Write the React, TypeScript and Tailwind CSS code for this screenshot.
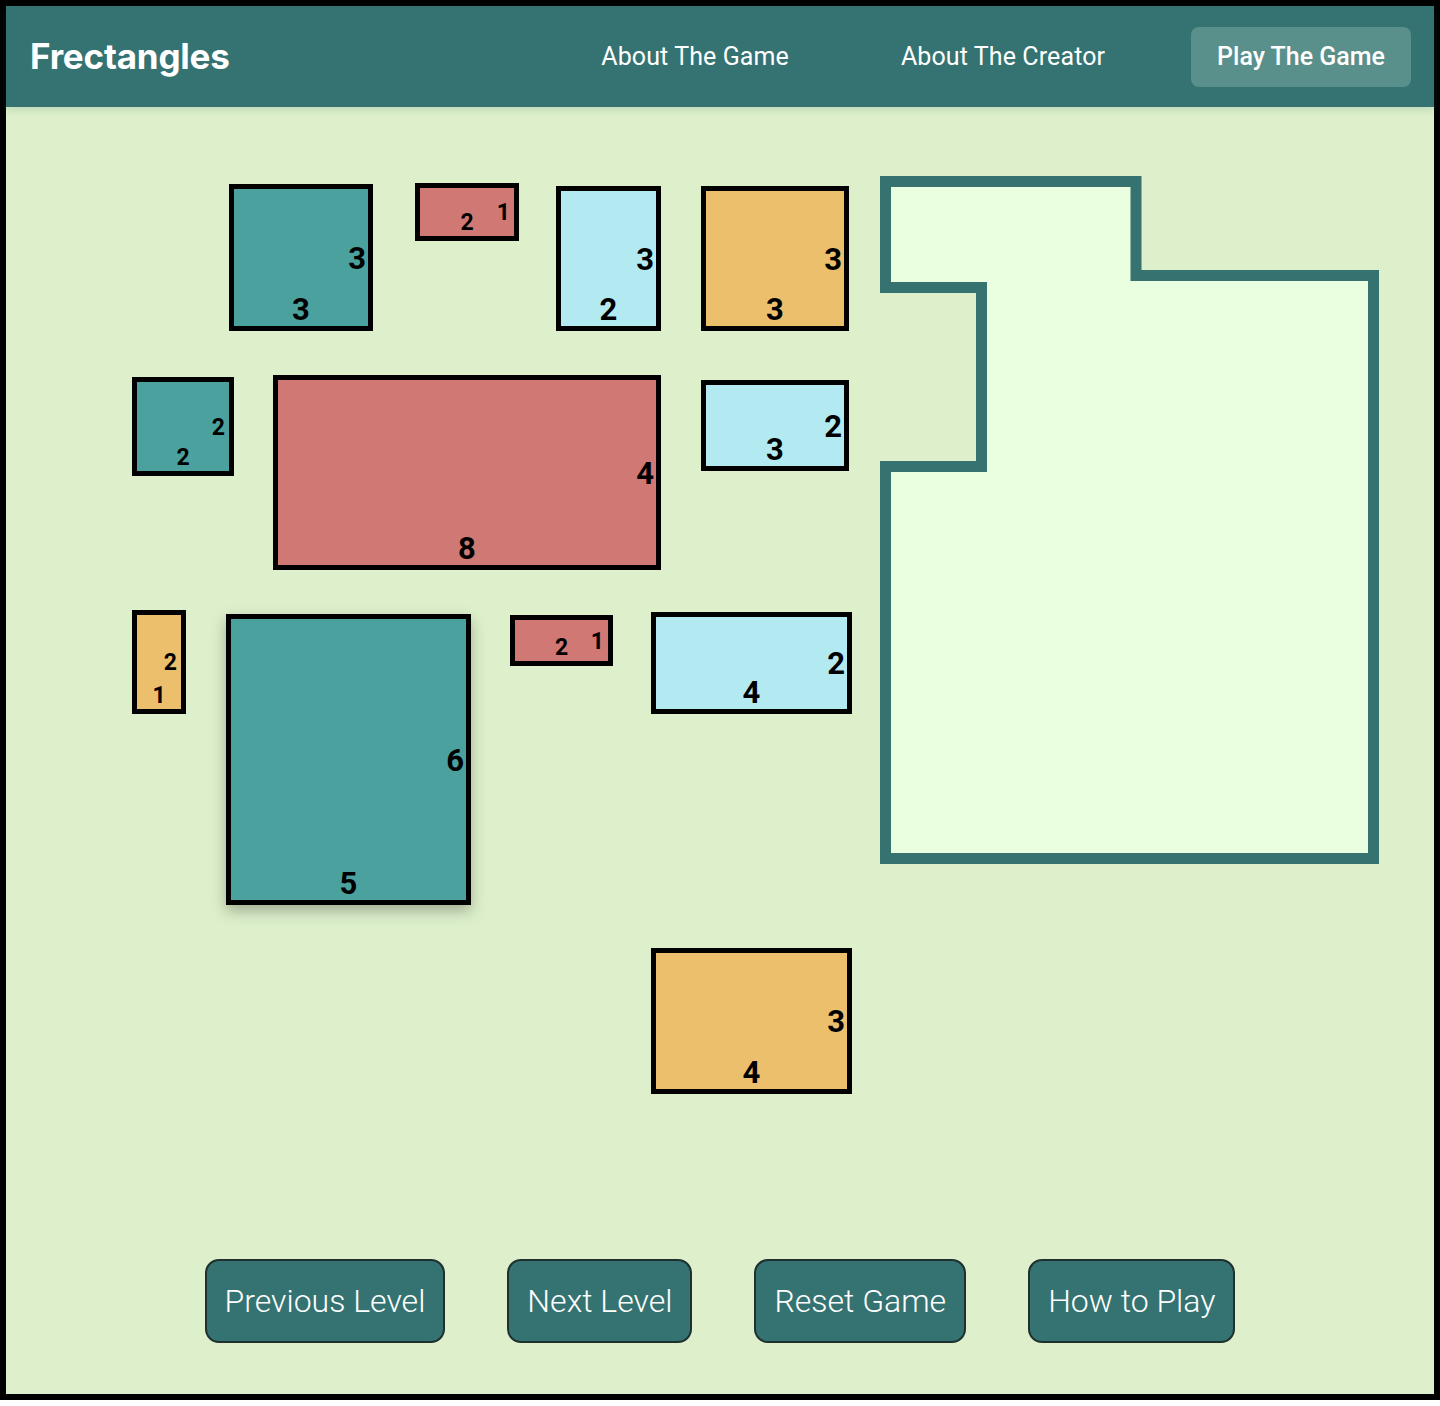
import React from "react";

type Tile = {
  x: number;
  y: number;
  w: number;
  h: number;
  color: string;
  across: number;
  down: number;
  small?: boolean;
  lifted?: boolean;
};

// page coords of each piece (outer edge), canvas starts at x=6, y=107
const tiles: Tile[] = [
  { x: 229, y: 184, w: 144, h: 147, color: "bg-[#4aa19e]", across: 3, down: 3 },
  { x: 415, y: 183, w: 104, h: 58, color: "bg-[#cf7874]", across: 2, down: 1, small: true },
  { x: 556, y: 186, w: 105, h: 145, color: "bg-[#b3eaf2]", across: 2, down: 3 },
  { x: 701, y: 186, w: 148, h: 145, color: "bg-[#ebbf6c]", across: 3, down: 3 },
  { x: 132, y: 377, w: 102, h: 99, color: "bg-[#4aa19e]", across: 2, down: 2, small: true },
  { x: 273, y: 375, w: 388, h: 195, color: "bg-[#cf7874]", across: 8, down: 4 },
  { x: 701, y: 380, w: 148, h: 91, color: "bg-[#b3eaf2]", across: 3, down: 2 },
  { x: 132, y: 610, w: 54, h: 104, color: "bg-[#ebbf6c]", across: 1, down: 2, small: true },
  { x: 226, y: 614, w: 245, h: 291, color: "bg-[#4aa19e]", across: 5, down: 6, lifted: true },
  { x: 510, y: 615, w: 103, h: 51, color: "bg-[#cf7874]", across: 2, down: 1, small: true },
  { x: 651, y: 612, w: 201, h: 102, color: "bg-[#b3eaf2]", across: 4, down: 2 },
  { x: 651, y: 948, w: 201, h: 146, color: "bg-[#ebbf6c]", across: 4, down: 3 },
];

function Piece({ t }: { t: Tile }) {
  const num = t.small ? "text-[23px]" : "text-[31px]";
  return (
    <div
      className={`absolute border-[5px] border-black ${t.color} ${t.lifted ? "shadow-[0_6px_14px_rgba(0,0,0,0.28)]" : ""}`}
      style={{ left: t.x - 6, top: t.y - 107, width: t.w, height: t.h }}
    >
      <span
        className={`absolute top-1/2 -translate-y-1/2 leading-none font-bold text-black ${num} ${t.small ? "right-[4px]" : "right-[2px]"}`}
      >
        {t.down}
      </span>
      <span
        className={`absolute left-1/2 -translate-x-1/2 leading-none font-bold text-black ${num} ${t.small ? "bottom-[2px]" : "bottom-[1px]"}`}
      >
        {t.across}
      </span>
    </div>
  );
}

function Board() {
  // target outline the pieces get dropped into
  return (
    <svg
      className="absolute"
      style={{ left: 874 - 6, top: 170 - 107 }}
      width={512}
      height={700}
      viewBox="874 170 512 700"
    >
      <polygon
        points="885.5,181.5 1136,181.5 1136,275.5 1373.5,275.5 1373.5,858.5 885.5,858.5 885.5,466.5 981.5,466.5 981.5,287.5 885.5,287.5"
        fill="#eaffe0"
        stroke="#357270"
        strokeWidth={11}
        strokeLinejoin="miter"
      />
    </svg>
  );
}

export default function App() {
  const buttons = ["Previous Level", "Next Level", "Reset Game", "How to Play"];
  return (
    <div className="w-[1440px] h-[1406px] bg-white">
      <div className="w-[1440px] h-[1400px] border-[6px] border-black flex flex-col bg-[#ddf0cb] font-['Roboto',sans-serif]">
        <header className="h-[101px] shrink-0 bg-[#347371] flex items-center justify-between pl-6 pr-[23px] shadow-[0_3px_8px_rgba(52,115,113,0.18)] relative z-10">
          <h1 className="text-white font-bold text-[35px] font-['Inter',sans-serif] tracking-[-0.2px]">Frectangles</h1>
          <nav className="flex items-center gap-[60px] text-white text-[25px]">
            <a className="px-[26px] tracking-[0.1px]">About The Game</a>
            <a className="px-[26px] tracking-[0.1px]">About The Creator</a>
            <a className="px-[26px] h-[60px] flex items-center rounded-lg bg-[#5a908b] font-medium">Play The Game</a>
          </nav>
        </header>

        <main className="relative flex-1">
          {tiles.map((t, i) => (
            <Piece key={i} t={t} />
          ))}
          <Board />
        </main>

        <div className="flex justify-center gap-[62px] pb-[51px] shrink-0">
          {buttons.map((b) => (
            <button
              key={b}
              className="h-[84px] px-[18px] rounded-[14px] border-2 border-[#1f302e] bg-[#347371] text-white text-[32px] font-light"
            >
              {b}
            </button>
          ))}
        </div>
      </div>
    </div>
  );
}
